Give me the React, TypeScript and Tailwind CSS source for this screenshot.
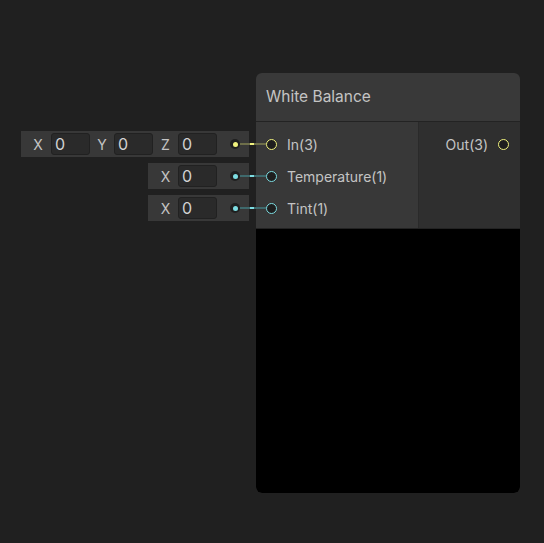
import React from "react";

type Port = { label: string; color: string; dim: string };

const inputs: Port[] = [
  { label: "In(3)", color: "#f0f27e", dim: "#6e6f4a" },
  { label: "Temperature(1)", color: "#7ddde2", dim: "#3f6a6d" },
  { label: "Tint(1)", color: "#7ddde2", dim: "#3f6a6d" },
];

const PortCircle: React.FC<{ color: string }> = ({ color }) => (
  <span
    className="block w-[11px] h-[11px] rounded-full border bg-[#1e1e1e] shrink-0"
    style={{ borderColor: color }}
  />
);

const Dot: React.FC<{ color: string }> = ({ color }) => (
  <span className="flex items-center justify-center w-[10px] h-[10px] rounded-full bg-[#1f1f1f] shrink-0">
    <span className="block w-[5px] h-[5px] rounded-full" style={{ backgroundColor: color }} />
  </span>
);

const Field: React.FC<{ axis: string; labelW: string }> = ({ axis, labelW }) => (
  <>
    <span className={`${labelW} text-center text-[14px] text-[#c4c4c4]`}>{axis}</span>
    <span className="w-[39px] h-[22px] rounded-[3px] bg-[#2a2a2a] border border-[#212121] pl-[3px] flex items-center text-[16px] text-[#d2d2d2]">
      0
    </span>
  </>
);

const Wire: React.FC<{ top: string; port: Port }> = ({ top, port }) => (
  <div className={`absolute left-[240px] ${top} w-[26px] h-[2px] flex`}>
    <span className="w-[10px] h-full" style={{ backgroundColor: port.dim }} />
    <span className="w-[4px] h-full" style={{ backgroundColor: port.color }} />
    <span className="flex-1 h-full" style={{ backgroundColor: port.dim }} />
  </div>
);

export default function App() {
  return (
    <div
      className="relative w-[544px] h-[543px] bg-[#202020] overflow-hidden"
      style={{ fontFamily: "Inter, 'Noto Sans', sans-serif" }}
    >
      {/* inline value fields feeding the node inputs */}
      <div className="absolute top-[131px] right-[295px] flex flex-col items-end gap-[6px]">
        <div className="h-[26px] bg-[#383838] flex items-center pl-[4px] pr-[9px]">
          <Field axis="X" labelW="w-[26px]" />
          <Field axis="Y" labelW="w-[24px]" />
          <Field axis="Z" labelW="w-[25px]" />
          <span className="ml-[13px]">
            <Dot color={inputs[0].color} />
          </span>
        </div>
        <div className="h-[26px] bg-[#383838] flex items-center pl-[5px] pr-[9px]">
          <Field axis="X" labelW="w-[25px]" />
          <span className="ml-[13px]">
            <Dot color={inputs[1].color} />
          </span>
        </div>
        <div className="h-[26px] bg-[#383838] flex items-center pl-[5px] pr-[9px]">
          <Field axis="X" labelW="w-[25px]" />
          <span className="ml-[13px]">
            <Dot color={inputs[2].color} />
          </span>
        </div>
      </div>

      {/* node */}
      <div className="absolute left-[256px] top-[73px] w-[264px] h-[420px] rounded-[6px] flex flex-col overflow-hidden bg-[#232323]">
        <div className="h-[48px] bg-[#393939] flex items-center px-[10px] text-[15.5px] text-[#c4c4c4]">
          White Balance
        </div>
        <div className="h-[1px] bg-[#232323]" />
        <div className="h-[106px] flex">
          <div className="w-[162px] bg-[#383838] pt-[6px]">
            {inputs.map((p) => (
              <div key={p.label} className="h-[32px] flex items-center pl-[10px] gap-[10px]">
                <PortCircle color={p.color} />
                <span className="text-[14px] text-[#c4c4c4]">{p.label}</span>
              </div>
            ))}
          </div>
          <div className="w-[1px] bg-[#2a2a2a]" />
          <div className="flex-1 bg-[#2f2f2f] pt-[6px]">
            <div className="h-[32px] flex items-center justify-end pr-[11px] gap-[10px]">
              <span className="text-[14px] text-[#c4c4c4]">Out(3)</span>
              <PortCircle color={inputs[0].color} />
            </div>
          </div>
        </div>
        <div className="h-[1px] bg-[#232323]" />
        <div className="flex-1 bg-black rounded-b-[6px]" />
      </div>

      <Wire top="top-[143px]" port={inputs[0]} />
      <Wire top="top-[175px]" port={inputs[1]} />
      <Wire top="top-[207px]" port={inputs[2]} />
    </div>
  );
}
